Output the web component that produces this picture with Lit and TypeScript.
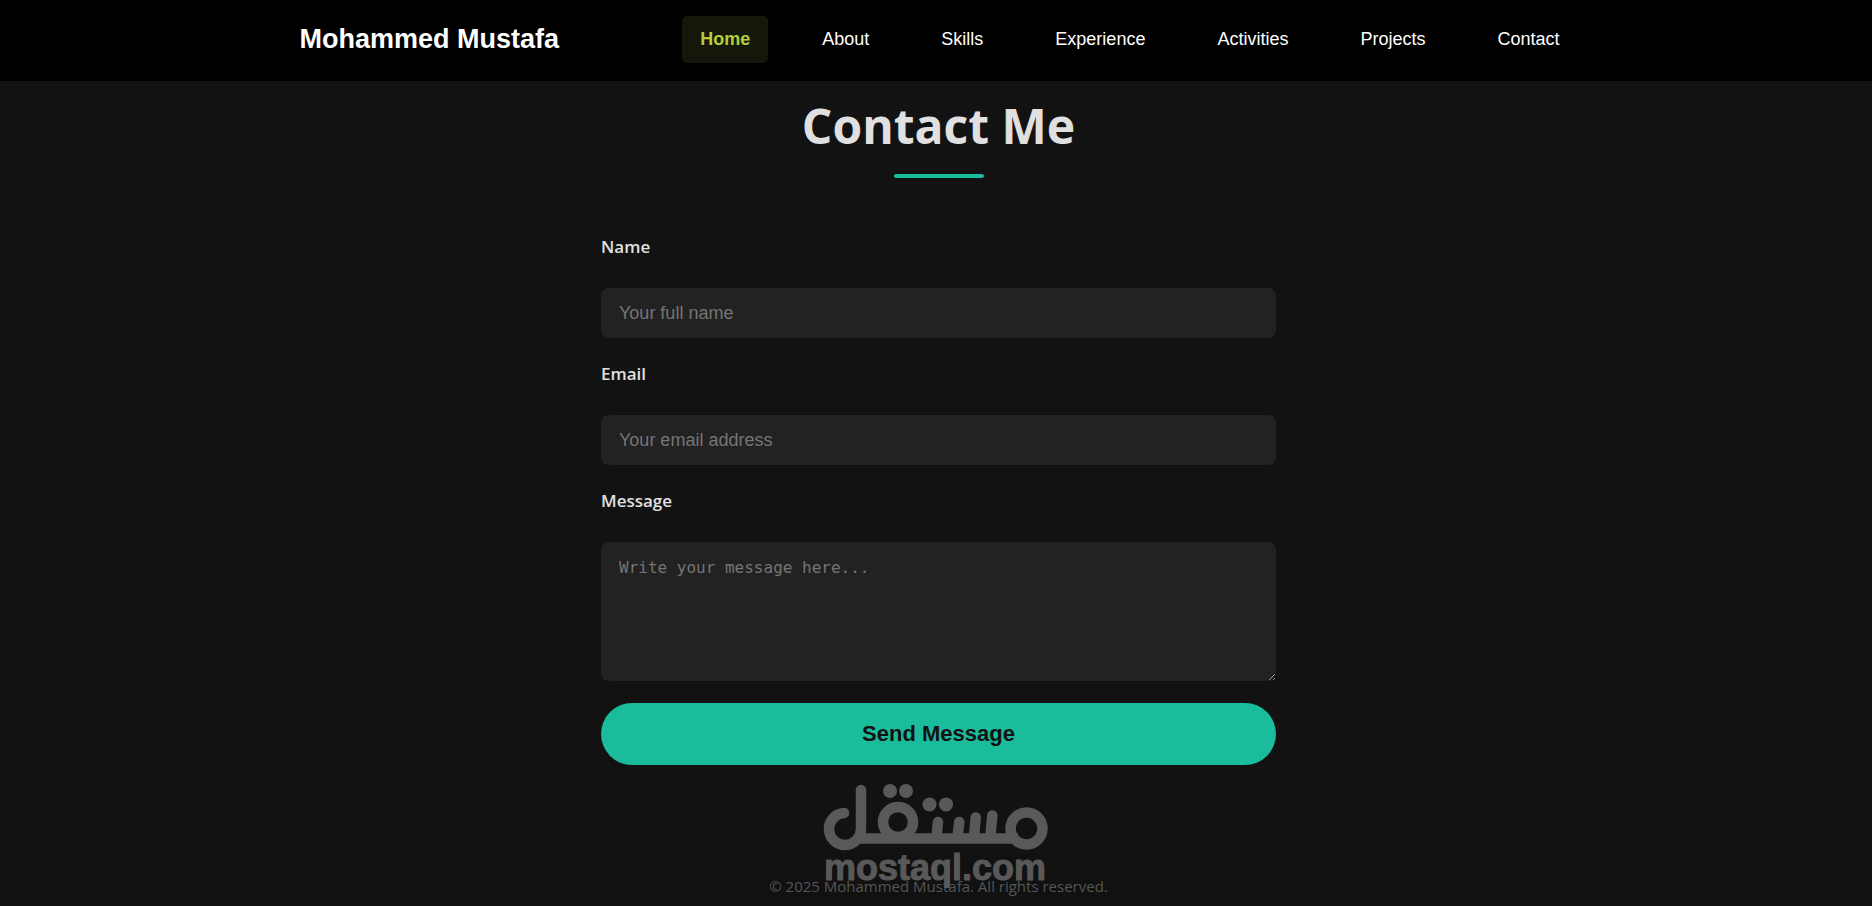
import { LitElement, html, css } from "lit";
import { customElement, state } from "lit/decorators.js";

const LINKS = ["Home", "About", "Skills", "Experience", "Activities", "Projects", "Contact"];

@customElement("mostaql-mark")
class MostaqlMark extends LitElement {
  static styles = css`
    :host {
      display: block;
      width: 228px;
    }
    svg {
      display: block;
      width: 100%;
    }
    .word {
      font: bold 36px "Liberation Sans", Arial, sans-serif;
      stroke: #595959;
      stroke-width: 1px;
      stroke-linejoin: round;
    }
  `;

  render() {
    return html`
      <svg viewBox="0 0 228 106" fill="#595959" role="img" aria-label="mostaql.com">
        <g fill="none" stroke="#595959" stroke-width="10.5" stroke-linecap="round">
          <path d="M22 31 A16 16 0 1 0 39 47 V8" />
          <path d="M37 56.500 H196" stroke-linecap="butt" />
          <circle cx="76" cy="40" r="15" />
          <circle cx="204.500" cy="46.500" r="16" />
          <path d="M114.500 55 L116 40 M135.500 55 L137.300 40 M152 55 L153.700 35.500 M168.300 55 L170.300 33.500" />
        </g>
        <circle cx="68" cy="9" r="7" />
        <circle cx="84" cy="9" r="7" />
        <circle cx="107.500" cy="22.500" r="7" />
        <circle cx="124" cy="22.500" r="7" />
        <text class="word" x="2" y="98">mostaql.com</text>
      </svg>
    `;
  }
}

@customElement("app-root")
class AppRoot extends LitElement {
  @state() private current = "Home";

  static styles = css`
    :host {
      display: flex;
      flex-direction: column;
      min-height: 100vh;
      background: #121212;
      color: #e0e0e0;
      font-family: "Segoe UI", "Open Sans", sans-serif;
    }
    * {
      box-sizing: border-box;
    }
    header {
      background: #000;
      padding: 16px 16px 18px 21px;
    }
    .bar {
      display: flex;
      justify-content: space-between;
      align-items: flex-start;
      max-width: 1278px;
      margin: 0 auto;
      font-family: "Liberation Sans", Arial, sans-serif;
    }
    .brand {
      color: #fff;
      font-size: 27px;
      font-weight: bold;
      line-height: 46px;
      text-decoration: none;
    }
    nav {
      display: flex;
      gap: 36px;
    }
    .link {
      padding: 12px 18px;
      border-radius: 5px;
      color: #fff;
      font-size: 18px;
      line-height: 23px;
      text-decoration: none;
    }
    .link.active {
      background: #14180a;
      color: #b5cc3c;
      font-weight: bold;
    }
    main {
      flex: 1;
      padding: 10px 16px 18px 21px;
    }
    .inner {
      display: flex;
      flex-direction: column;
      max-width: 675px;
      margin: 0 auto;
    }
    h1 {
      margin: 0;
      font-size: 48px;
      line-height: 70px;
      text-align: center;
    }
    .rule {
      align-self: center;
      width: 90px;
      height: 4px;
      margin: 13px 0 55px;
      border-radius: 2px;
      background: #1abc9c;
    }
    form {
      display: flex;
      flex-direction: column;
      gap: 22px;
    }
    label {
      margin-bottom: 5px;
      font-size: 17px;
      font-weight: 600;
      line-height: 28px;
    }
    .field {
      display: block;
      width: 100%;
      border: 0;
      border-radius: 8px;
      padding: 14px 18px;
      background: #222;
      color: #e0e0e0;
      font: 18px/22px "Liberation Sans", Arial, sans-serif;
    }
    .field::placeholder {
      color: #757575;
    }
    .area {
      height: 139px;
      font: 16px/24px Consolas, "DejaVu Sans Mono", monospace;
      resize: vertical;
    }
    .send {
      border: 0;
      border-radius: 31px;
      padding: 18px;
      background: #1abc9c;
      color: #121212;
      font: bold 22px/26px "Liberation Sans", Arial, sans-serif;
      cursor: pointer;
    }
    footer {
      position: relative;
      padding: 20px 16px 7px 21px;
      background: #111;
      color: #555;
      font-size: 15px;
      line-height: 26px;
      text-align: center;
    }
    .mark {
      position: absolute;
      left: 50%;
      bottom: 18px;
      transform: translateX(-50%);
    }
    p {
      margin: 0;
    }
  `;

  render() {
    return html`
      <header>
        <div class="bar">
          <a class="brand" href="#home">Mohammed Mustafa</a>
          <nav>
            ${LINKS.map(
              (name) => html`<a
                class="link ${name === this.current ? "active" : ""}"
                href="#${name.toLowerCase()}"
                @click=${() => (this.current = name)}
                >${name}</a
              >`
            )}
          </nav>
        </div>
      </header>
      <main>
        <div class="inner">
          <h1>Contact Me</h1>
          <div class="rule"></div>
          <form @submit=${(e: Event) => e.preventDefault()}>
            <label for="name">Name</label>
            <input class="field" id="name" type="text" placeholder="Your full name" />
            <label for="email">Email</label>
            <input class="field" id="email" type="email" placeholder="Your email address" />
            <label for="message">Message</label>
            <textarea class="field area" id="message" placeholder="Write your message here..."></textarea>
            <button class="send" type="submit">Send Message</button>
          </form>
        </div>
      </main>
      <footer>
        <p>© 2025 Mohammed Mustafa. All rights reserved.</p>
        <mostaql-mark class="mark"></mostaql-mark>
      </footer>
    `;
  }
}
